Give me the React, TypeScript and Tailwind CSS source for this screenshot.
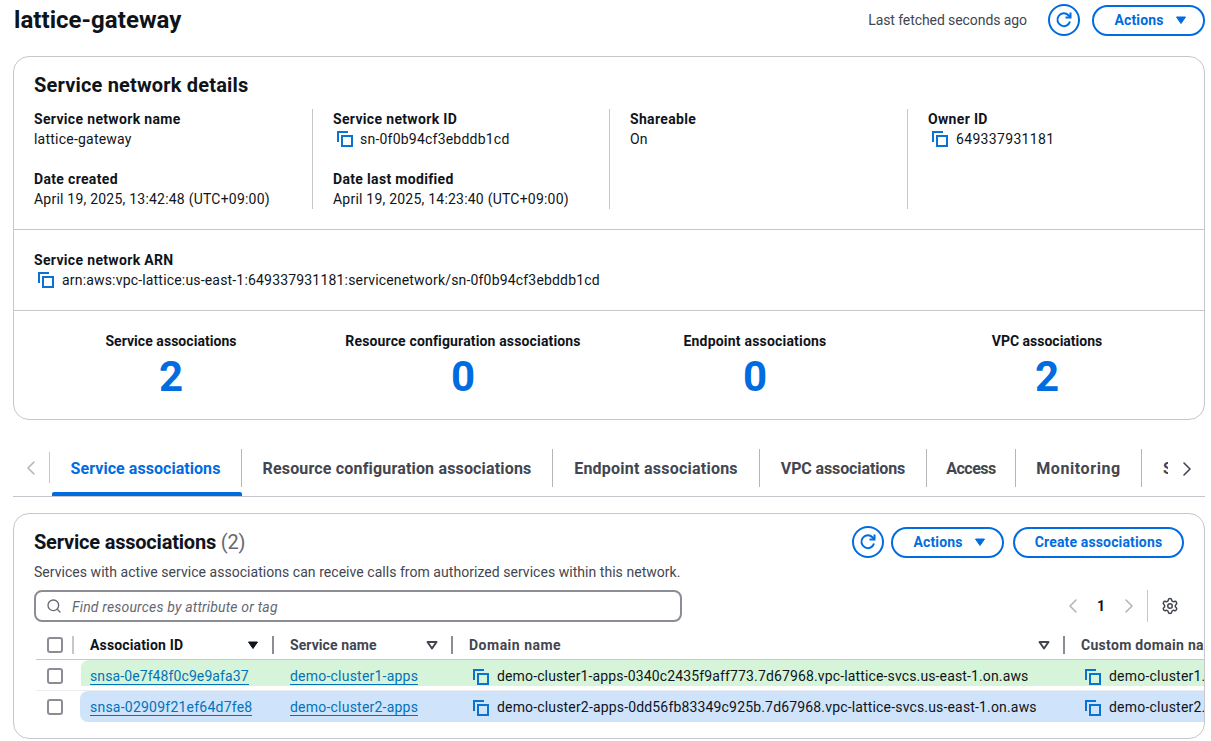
import React from "react";
import { ChevronLeft, ChevronRight, Search, Settings } from "lucide-react";

const Copy = () => (
  <svg width="16" height="16" viewBox="0 0 16 16" fill="none" stroke="#0972d3" strokeWidth="2" className="shrink-0">
    <path d="M11 1H1v10" />
    <rect x="5" y="5" width="10" height="10" />
  </svg>
);

const Refresh = () => (
  <svg width="18" height="18" viewBox="0 0 18 18" fill="none" stroke="#006ce0" strokeWidth="2">
    <path d="M15 10.5A6.4 6.4 0 1 1 13.4 4.2L15 6" />
    <path d="M15.5 1.5v5h-5" />
  </svg>
);

const Caret = ({ color = "#006ce0", outline = false }: { color?: string; outline?: boolean }) => (
  <svg width="12" height="12" viewBox="0 0 12 12" className="shrink-0">
    <path d="M1.5 3h9L6 9.5z" fill={outline ? "none" : color} stroke={color} strokeWidth={outline ? 2 : 1} strokeLinejoin="round" />
  </svg>
);

const IconBtn = () => (
  <button className="flex h-[32px] w-[32px] shrink-0 items-center justify-center rounded-full border-2 border-[#006ce0]">
    <Refresh />
  </button>
);

const Btn = ({ label, caret, w }: { label: string; caret?: boolean; w: string }) => (
  <button className={`flex h-[31px] ${w} shrink-0 items-center justify-center gap-[11px] rounded-full border-2 border-[#006ce0] text-[14px] font-bold tracking-[0.15px] text-[#006ce0] ${caret ? "pl-[4px]" : ""}`}>
    {label}
    {caret && <Caret />}
  </button>
);

const KV = ({ label, children, tr = "tracking-[0.22px]" }: { label: string; children: React.ReactNode; tr?: string }) => (
  <div>
    <div className="h-[20px] text-[14px] font-bold leading-[20px] tracking-[0.33px] text-[#0f141a]">{label}</div>
    <div className={`h-[20px] text-[14px] leading-[20px] ${tr} text-[#0f141a]`}>{children}</div>
  </div>
);

const CopyVal = ({ text, gap = "gap-[8px]" }: { text: string; gap?: string }) => (
  <div className={`flex items-center ${gap} pl-[4px]`}>
    <Copy />
    <span>{text}</span>
  </div>
);

const Stat = ({ label, value, tr }: { label: string; value: string; tr: string }) => (
  <div className="flex flex-col items-center">
    <div className={`h-[20px] text-[14px] font-bold leading-[20px] ${tr} text-[#0f141a]`}>{label}</div>
    <div className="h-[48px] text-[42px] font-bold leading-[52px] text-[#006ce0]">{value}</div>
  </div>
);

const Tab = ({ label, w, tr, active }: { label: string; w: string; tr: string; active?: boolean }) => (
  <div className={`relative h-[47px] ${w} shrink-0`}>
    <div className={`flex h-[38px] items-center justify-center whitespace-nowrap border-r border-[#b4b4bb] pt-[2px] text-[16px] font-bold ${tr} ${active ? "text-[#006ce0]" : "text-[#424650]"}`}>
      {label}
    </div>
    {active && <div className="absolute bottom-0 left-[2px] right-0 h-[4px] rounded-t-[2px] bg-[#006ce0]" />}
  </div>
);

const Divider = ({ light }: { light?: boolean }) => (
  <div className={`h-[18px] w-[2px] shrink-0 ${light ? "bg-[#c6c6cd]" : "bg-[#8c8c94]"}`} />
);

const Check = () => <div className="h-[16px] w-[16px] rounded-[3px] border-2 border-[#8c8c94] bg-white" />;

const Head = ({ label, w, tr, filled, dark }: { label: string; w: string; tr: string; filled?: boolean; dark?: boolean }) => (
  <div className={`flex ${w} shrink-0 items-center justify-between pl-[16px] pr-[13px] text-[14px] font-bold ${dark ? "text-[#0f141a]" : "text-[#424650]"}`}>
    <span className={`pt-[2px] ${tr}`}>{label}</span>
    <Caret color={filled ? "#0f141a" : "#424650"} outline={!filled} />
  </div>
);

const A = ({ children, tr }: { children: React.ReactNode; tr: string }) => (
  <span className={`h-[17px] border-b border-[#0073bb] leading-[16px] ${tr} text-[#0073bb]`}>{children}</span>
);

const Row = ({ id, idTr, name, domain, domTr, custom, h, box, first }: { id: string; idTr: string; name: string; domain: string; domTr: string; custom: string; h: string; box: string; first: string }) => (
  <div className={`flex ${h} items-start whitespace-nowrap text-[14px] text-[#0f141a]`}>
    <div className="h-full w-[44px] shrink-0 pl-[11px] pt-[8px]">
      <Check />
    </div>
    <div className={`flex ${box} min-w-0 flex-1 items-start overflow-hidden pt-[8px] leading-[17px]`}>
      <div className={`flex ${first} shrink-0`}><A tr={idTr}>{id}</A></div>
      <div className="flex w-[179px] shrink-0 pl-[16px]"><A tr="tracking-[0.22px]">{name}</A></div>
      <div className="flex w-[611px] shrink-0 items-center gap-[8px] pl-[20px]"><Copy /><span className={domTr}>{domain}</span></div>
      <div className="flex shrink-0 items-center gap-[8px] pl-[21px]"><Copy /><span className="tracking-[0.22px]">{custom}</span></div>
    </div>
  </div>
);

export default function App() {
  return (
    <div className="h-[741px] w-[1211px] overflow-hidden bg-white pl-[13px] pr-[6px] font-['Roboto',sans-serif] text-[#0f141a]">
      <div className="flex h-[40px] items-center justify-between">
        <h1 className="ml-[1px] text-[24px] font-bold tracking-[0.05px]">lattice-gateway</h1>
        <div className="flex items-center">
          <span className="mr-[21px] text-[14px] tracking-[-0.08px] text-[#424650]">Last fetched seconds ago</span>
          <IconBtn />
          <div className="ml-[12px]"><Btn label="Actions" caret w="w-[113px]" /></div>
        </div>
      </div>

      <section className="mt-[16px] h-[364px] rounded-[16px] border border-[#c6c6cd]">
        <div className="px-[20px] pb-[20px] pt-[18px]">
          <h2 className="h-[20px] text-[20px] font-bold leading-[20px] tracking-[0.18px]">Service network details</h2>
          <div className="mt-[14px] grid grid-cols-[279px_297px_298px_1fr]">
            <div className="flex flex-col gap-[20px] border-r border-[#c6c6cd]">
              <KV label="Service network name">lattice-gateway</KV>
              <KV label="Date created">April 19, 2025, 13:42:48 (UTC+09:00)</KV>
            </div>
            <div className="flex flex-col gap-[20px] border-r border-[#c6c6cd] pl-[20px]">
              <KV label="Service network ID"><CopyVal text="sn-0f0b94cf3ebddb1cd" gap="gap-[7px]" /></KV>
              <KV label="Date last modified">April 19, 2025, 14:23:40 (UTC+09:00)</KV>
            </div>
            <div className="border-r border-[#c6c6cd] pl-[20px]">
              <KV label="Shareable">On</KV>
            </div>
            <div className="pl-[20px]">
              <KV label="Owner ID" tr="tracking-[0.33px]"><CopyVal text="649337931181" /></KV>
            </div>
          </div>
        </div>
        <div className="h-[81px] border-t border-[#c6c6cd] px-[20px] pt-[20px]">
          <KV label="Service network ARN" tr="tracking-[0.18px]"><CopyVal text="arn:aws:vpc-lattice:us-east-1:649337931181:servicenetwork/sn-0f0b94cf3ebddb1cd" /></KV>
        </div>
        <div className="grid grid-cols-4 border-t border-[#c6c6cd] px-[11px] pt-[20px]">
          <Stat label="Service associations" value="2" tr="tracking-[0.05px]" />
          <Stat label="Resource configuration associations" value="0" tr="tracking-[0.15px]" />
          <Stat label="Endpoint associations" value="0" tr="tracking-[0.2px]" />
          <Stat label="VPC associations" value="2" tr="tracking-normal" />
        </div>
      </section>

      <div className="mt-[30px] flex h-[47px] items-start border-b border-[#c6c6cd]">
        <div className="mt-[2px] flex h-[31px] w-[37px] shrink-0 items-center justify-center border-r border-[#c6c6cd]">
          <ChevronLeft size={24} color="#b4b4bb" strokeWidth={1.6} />
        </div>
        <div className="-mt-px flex w-[1118px] shrink-0 overflow-hidden">
          <Tab label="Service associations" w="w-[192px]" tr="tracking-[0.05px]" active />
          <Tab label="Resource configuration associations" w="w-[311px]" tr="tracking-[0.17px]" />
          <Tab label="Endpoint associations" w="w-[207px]" tr="tracking-[0.24px]" />
          <Tab label="VPC associations" w="w-[167px]" tr="tracking-[-0.12px]" />
          <Tab label="Access" w="w-[89px]" tr="tracking-[-0.5px]" />
          <Tab label="Monitoring" w="w-[126px]" tr="tracking-[0.6px]" />
          <div className="flex h-[38px] shrink-0 items-center pl-[21px] pt-[2px] text-[16px] font-bold text-[#424650]">Service</div>
        </div>
        <div className="flex h-[38px] flex-1 items-center justify-center">
          <ChevronRight size={24} color="#424650" strokeWidth={1.6} />
        </div>
      </div>

      <section className="mt-[16px] h-[226px] overflow-hidden rounded-[16px] border border-[#c6c6cd]">
        <div className="flex items-center justify-between px-[20px] pt-[12px]">
          <h2 className="text-[20px] font-bold leading-[30px] tracking-[-0.2px]">
            Service associations <span className="font-normal text-[#656871]">(2)</span>
          </h2>
          <div className="flex items-center">
            <IconBtn />
            <div className="ml-[7px]"><Btn label="Actions" caret w="w-[113px]" /></div>
            <div className="ml-[9px]"><Btn label="Create associations" w="w-[171px]" /></div>
          </div>
        </div>
        <p className="mt-[4px] h-[20px] px-[20px] text-[14px] leading-[20px] tracking-[0.04px] text-[#424650]">
          Services with active service associations can receive calls from authorized services within this network.
        </p>
        <div className="mt-[8px] flex items-center justify-between pl-[20px] pr-[25px]">
          <div className="flex h-[32px] w-[648px] items-center gap-[10px] rounded-[8px] border-2 border-[#8c8c94] pl-[10px]">
            <Search size={16} color="#656871" strokeWidth={2} />
            <span className="pt-[2px] text-[14px] italic tracking-[0.18px] text-[#656871]">Find resources by attribute or tag</span>
          </div>
          <div className="flex h-[32px] items-center">
            <ChevronLeft size={24} color="#b4b4bb" strokeWidth={1.6} />
            <span className="mx-[12px] w-[8px] text-center text-[14px] font-bold">1</span>
            <ChevronRight size={24} color="#b4b4bb" strokeWidth={1.6} />
            <div className="ml-[6px] h-[32px] w-px bg-[#c6c6cd]" />
            <div className="ml-[13px]"><Settings size={18} color="#424650" strokeWidth={2} /></div>
          </div>
        </div>

        <div className="mt-[8px] pl-[22px]">
          <div className="flex h-[30px] items-center whitespace-nowrap border-b border-[#c6c6cd]">
            <div className="shrink-0 pl-[11px]"><Check /></div>
            <div className="ml-[9px]"><Divider light /></div>
            <Head label="Association ID" w="w-[198px]" tr="tracking-[0.15px]" filled dark />
            <Divider />
            <Head label="Service name" w="w-[177px]" tr="tracking-[0.08px]" />
            <Divider />
            <Head label="Domain name" w="w-[610px]" tr="tracking-[0.5px]" />
            <Divider />
            <div className="pl-[16px] pt-[2px] text-[14px] font-bold tracking-[0.3px] text-[#424650]">Custom domain name</div>
          </div>
          <div className="border-b border-[#ebebf0]">
            <Row
              id="snsa-0e7f48f0c9e9afa37"
              idTr="tracking-[0.1px]"
              name="demo-cluster1-apps"
              domain="demo-cluster1-apps-0340c2435f9aff773.7d67968.vpc-lattice-svcs.us-east-1.on.aws"
              domTr="tracking-[0.14px]"
              custom="demo-cluster1.example.com"
              h="h-[30px]"
              box="ml-[1px] h-[26px] rounded-tl-[8px] bg-[#d6f4d9]"
              first="w-[193px] pl-[9px]"
            />
          </div>
          <Row
            id="snsa-02909f21ef64d7fe8"
            idTr="tracking-[0.23px]"
            name="demo-cluster2-apps"
            domain="demo-cluster2-apps-0dd56fb83349c925b.7d67968.vpc-lattice-svcs.us-east-1.on.aws"
            domTr="tracking-[0.165px]"
            custom="demo-cluster2.example.com"
            h="h-[31px]"
            box="h-[31px] rounded-l-[8px] bg-[#cfe3fb]"
            first="w-[194px] pl-[10px]"
          />
        </div>
      </section>
    </div>
  );
}
